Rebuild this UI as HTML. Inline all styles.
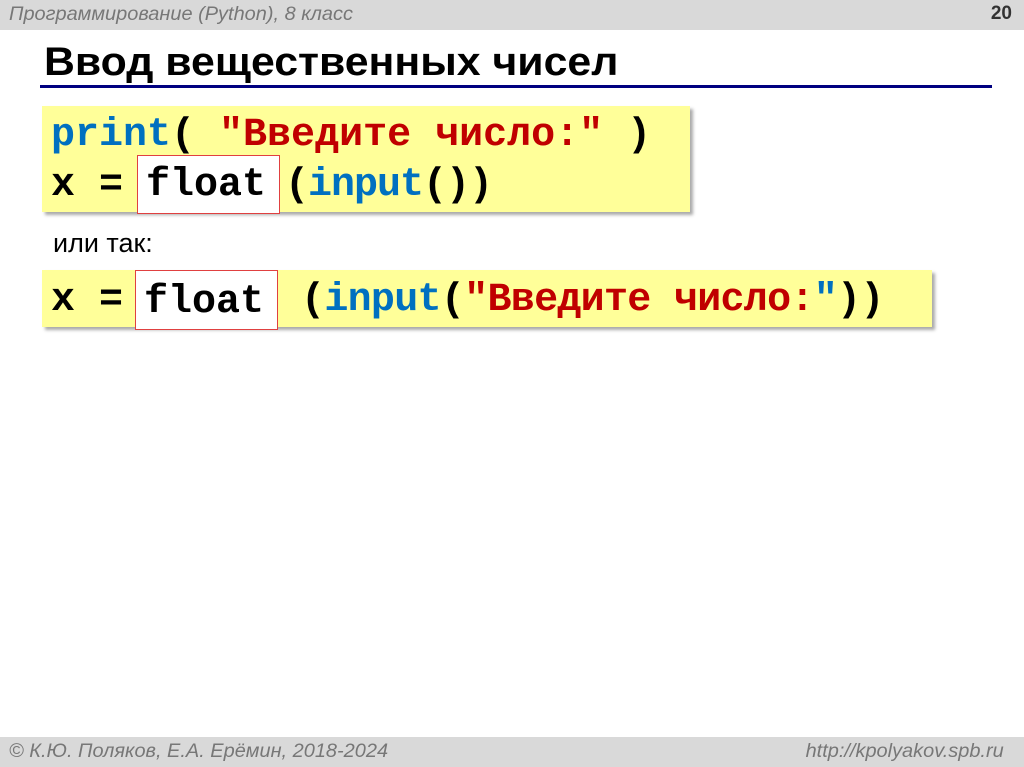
<!DOCTYPE html>
<html><head><meta charset="utf-8"><style>
body{margin:0;width:1024px;height:767px;position:relative;background:#fff;overflow:hidden;font-family:"Liberation Sans",Arial,Helvetica,sans-serif}
.hdr{position:absolute;left:0;top:0;width:1024px;height:30px;background:#d9d9d9}
.ftr{position:absolute;left:0;top:737px;width:1024px;height:30px;background:#d9d9d9}
.g{position:absolute;color:#777;font-style:italic;font-size:19px;font-family:"Liberation Sans Narrow","Arial Narrow","Liberation Sans",Arial,sans-serif;transform:scaleX(1.05);white-space:nowrap}
.box{position:absolute;background:#ffff99;box-shadow:3px 3px 3px #aaa}
.c{position:absolute;font-family:"Liberation Mono","Courier New",Courier,Cousine,monospace;font-weight:bold;font-size:40px;white-space:pre;line-height:1}
.b{color:#0070c0}.r{color:#c00000}.k{color:#000}
.rb{position:absolute;background:#fff;border:1.5px solid #e04040}
</style></head><body>
<div class="hdr"></div>
<div class="g" style="left:9px;top:4px;transform-origin:left">Программирование (Python), 8 класс</div>
<div style="position:absolute;right:12px;top:3px;font-weight:bold;font-size:19px;color:#333">20</div>
<div style="position:absolute;left:44px;top:40px;font-weight:bold;font-size:40px;color:#000;font-family:'Liberation Sans Narrow','Arial Narrow','Liberation Sans',Arial,sans-serif;transform:scaleX(1.07);transform-origin:left;white-space:nowrap">Ввод вещественных чисел</div>
<div style="position:absolute;left:40px;top:85px;width:952px;height:3px;background:#000080"></div>

<div class="box" style="left:42px;top:106px;width:648px;height:106px"></div>
<div class="rb" style="left:137px;top:155px;width:141px;height:57px"></div>
<div class="c" style="left:51px;top:116px"><span class="b">print</span><span class="k">( </span><span class="r">"Введите число:"</span><span class="k"> )</span></div>
<div class="c k" style="left:51px;top:166px">x = </div>
<div class="c k" style="left:146px;top:166px">float</div>
<div class="c" style="left:285px;top:166px;letter-spacing:-1px"><span class="k">(</span><span class="b">input</span><span class="k">())</span></div>

<div style="position:absolute;left:53px;top:228px;font-size:27px;color:#000;font-family:'Liberation Sans Narrow','Arial Narrow','Liberation Sans',Arial,sans-serif">или так:</div>

<div class="box" style="left:42px;top:270px;width:890px;height:57px"></div>
<div class="rb" style="left:135px;top:270px;width:141px;height:58px"></div>
<div class="c k" style="left:51px;top:281px">x = </div>
<div class="c k" style="left:144px;top:283px">float</div>
<div class="c" style="left:301px;top:281px;letter-spacing:-0.7px"><span class="k">(</span><span class="b">input</span><span class="k">(</span><span class="r">"Введите число:</span><span class="b">"</span><span class="k">))</span></div>

<div class="ftr"></div>
<div class="g" style="left:9px;top:741px;transform-origin:left">© К.Ю. Поляков, Е.А. Ерёмин, 2018-2024</div>
<div class="g" style="right:20px;top:741px;transform-origin:right">http://kpolyakov.spb.ru</div>
</body></html>
